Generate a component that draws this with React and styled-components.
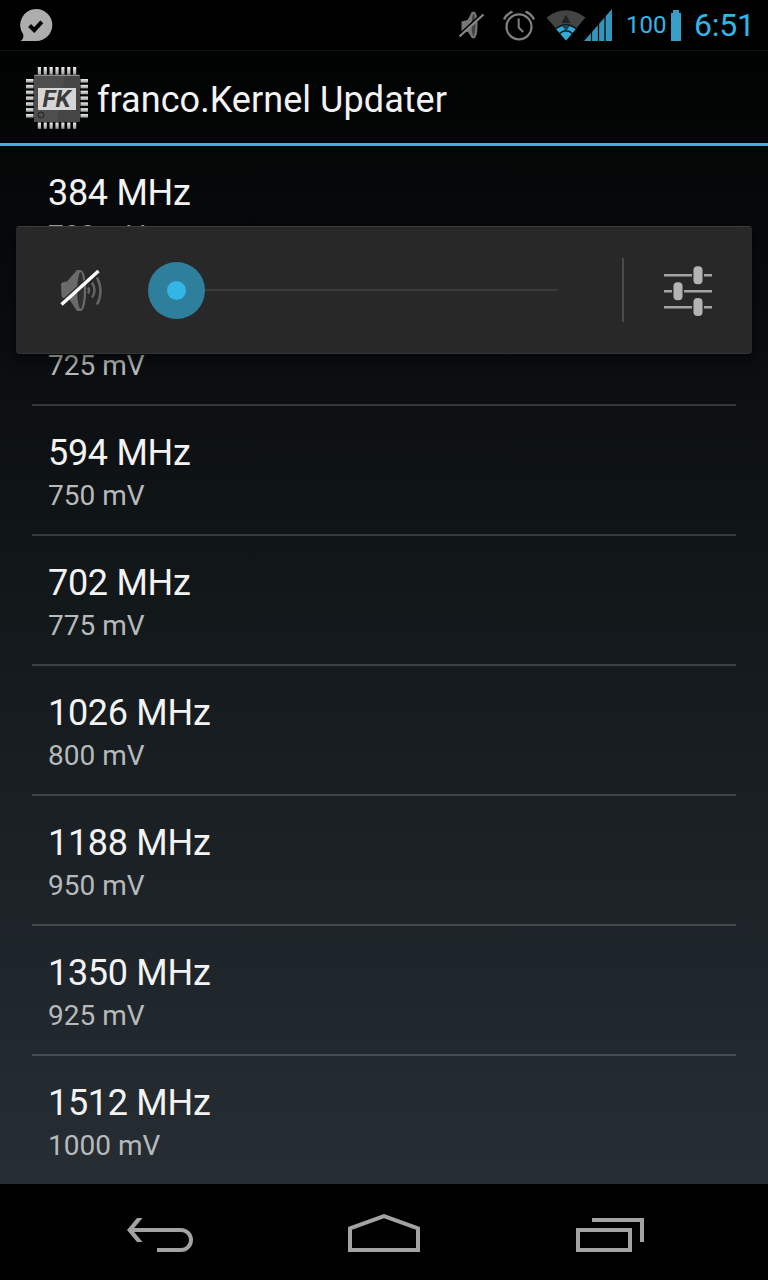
import React from "react";
import styled, { createGlobalStyle } from "styled-components";

const GlobalStyle = createGlobalStyle`
  * {
    box-sizing: border-box;
  }

  body {
    margin: 0;
    background: #000;
    font-family: Roboto, "Liberation Sans", sans-serif;
  }

  svg {
    display: block;
    flex: none;
  }
`;

const Screen = styled.div`
  position: relative;
  width: 768px;
  height: 1280px;
  display: flex;
  flex-direction: column;
  overflow: hidden;
  background: linear-gradient(#000 0, #010202 50px, #0c1012 410px, #262e34 1184px);
`;

const StatusBar = styled.header`
  height: 50px;
  display: flex;
  align-items: center;
  padding: 0 17px 0 20px;
  background: #000;
  color: #33b5e5;
`;

const StatusIcons = styled.div`
  display: flex;
  align-items: center;
  margin-left: auto;
`;

const Indicators = styled.div`
  display: flex;
  align-items: center;
  gap: 18px;
  margin-right: 11px;
`;

const Signals = styled.div`
  display: flex;

  svg + svg {
    margin-left: -2px;
  }
`;

const BatteryLevel = styled.span`
  width: 45px;
  margin-left: 14px;
  font-size: 24px;
  line-height: 52px;
`;

const Clock = styled.span`
  width: 57px;
  margin-left: 13px;
  font-size: 32px;
  line-height: 52px;
  letter-spacing: -0.2px;
  white-space: nowrap;
`;

const ActionBar = styled.div`
  height: 96px;
  display: flex;
  align-items: center;
  padding: 2px 0 0 25px;
  border-top: 1px solid #121414;
  border-bottom: 3px solid #3eb1e0;
`;

const Title = styled.h1`
  margin: 0 0 0 8px;
  padding-top: 4px;
  font-size: 36px;
  font-weight: 400;
  line-height: 42px;
  letter-spacing: 0.05px;
  color: #f3f3f3;
`;

const List = styled.ul`
  flex: 1;
  margin: 0;
  padding: 0 32px;
  list-style: none;
`;

const Item = styled.li`
  height: 130px;
  padding: 26px 16px 0;
  border-bottom: 2px solid rgba(255, 255, 255, 0.17);

  &:last-child {
    height: 128px;
    border-bottom: 0;
  }
`;

const Frequency = styled.div`
  font-size: 36px;
  line-height: 42px;
  letter-spacing: -0.3px;
  color: #f3f3f3;
`;

const Voltage = styled.div`
  margin-top: 5px;
  font-size: 28px;
  line-height: 33px;
  color: #b7b9ba;
`;

const VolumePanel = styled.div`
  position: absolute;
  top: 226px;
  left: 16px;
  width: 736px;
  height: 128px;
  display: flex;
  align-items: center;
  padding: 0 39px 0 44px;
  background: #282828;
  border-top: 1px solid #3c3c3c;
  border-bottom: 1px solid #333;
  border-radius: 4px;
  box-shadow: 0 4px 12px 3px rgba(0, 0, 0, 0.42);
`;

const Slider = styled.div`
  flex: 1;
  display: flex;
  align-items: center;
  margin-left: 43.5px;
`;

const Thumb = styled.div`
  width: 57px;
  height: 57px;
  display: grid;
  place-items: center;
  border-radius: 50%;
  background: #2d7f9c;

  &::after {
    content: "";
    width: 19px;
    height: 19px;
    border-radius: 50%;
    background: #33b5e5;
  }
`;

const Track = styled.div`
  flex: 1;
  height: 2px;
  background: #3b3b3b;
`;

const Separator = styled.div`
  width: 2px;
  height: 64px;
  margin: 0 39px 0 64px;
  background: #4a4a4a;
`;

const NavBar = styled.nav`
  height: 96px;
  display: flex;
  align-items: center;
  justify-content: space-between;
  padding: 0 124px;
  background: #000;
`;

const ChatIcon = () => (
  <svg width="33" height="34" viewBox="0 0 33 34">
    <path
      d="M16.3 1a16 16 0 1 1 0 32H.5c2.4-1.4 3.2-3.4 2.7-6.8A16 16 0 0 1 16.3 1z"
      fill="#adadad"
    />
    <path d="M9.6 17.500l4.600 4.600 7.600-8.200" fill="none" stroke="#000" strokeWidth="4" />
  </svg>
);

const SilentIcon = () => (
  <svg width="26" height="30" viewBox="0 0 26 30">
    <path d="M2.500 11.500l6-1.500L13 2h2.500v26H13l-4-6-6.500-1z" fill="#777" />
    <ellipse cx="14.500" cy="15" rx="3" ry="12.500" fill="#444" stroke="#777" strokeWidth="2" />
    <path d="M0 24.600L24 2.600" stroke="#000" strokeWidth="1.500" />
    <path d="M.5 26.500L24.500 4.500" stroke="#888" strokeWidth="2.200" />
  </svg>
);

const AlarmIcon = () => (
  <svg width="32" height="32" viewBox="0 0 32 32" fill="none" stroke="#808080">
    <circle cx="16" cy="17.800" r="12.500" strokeWidth="2.200" />
    <path d="M15.700 9.500v9l4.500 4.500" strokeWidth="2" />
    <path d="M1 10.500C3 6.500 6 4 9.500 2.700M31 10.500c-2-4-5-6.500-8.500-7.800" strokeWidth="2.400" />
  </svg>
);

const WifiIcon = () => (
  <svg width="40" height="32" viewBox="0 0 40 32">
    <path d="M.5 8.500Q20-6 39.500 8.500L20 31.500z" fill="#444" />
    <path d="M20 5.500l4.500 8.500h-9z" fill="#222" />
    <path d="M10 20Q20 11 30 20L20 31.500z" fill="#33a9d4" />
    <path
      d="M9 20.500Q20 11 31 20.500M13 25q7-6.500 14 0"
      fill="none"
      stroke="#04141a"
      strokeWidth="1.400"
    />
    <path d="M17 17.500h6l-3 4zM16 22l-1.500 1.500M24 22l1.500 1.500" fill="#1d4250" stroke="#1d4250" />
  </svg>
);

const SignalIcon = () => (
  <svg width="28" height="32" viewBox="0 0 28 32">
    <path d="M0 32L28 0v32z" fill="#3395ba" />
    <path d="M7.500 20v12M14.500 12v20M21 4v28" stroke="#000" strokeWidth="1.200" />
  </svg>
);

const BatteryIcon = () => (
  <svg width="10" height="31" viewBox="0 0 10 31">
    <path d="M2 0h6v3h2v28H0V3h2z" fill="#359fc7" />
  </svg>
);

const pins = [0, 1, 2, 3, 4, 5, 6];

const ChipIcon = () => (
  <svg width="64" height="64" viewBox="0 0 64 64">
    <defs>
      <linearGradient id="pin" x2="0" y2="1">
        <stop offset="0" stopColor="#eee" />
        <stop offset="1" stopColor="#999" />
      </linearGradient>
    </defs>
    {pins.map((i) => (
      <g key={i}>
        <rect x={12.8 + i * 5.87} y="1" width="3.200" height="8" fill="url(#pin)" />
        <rect x={12.8 + i * 5.87} y="56.500" width="3.200" height="6.300" fill="url(#pin)" />
        <rect x="1" y={13 + i * 5.83} width="7.500" height="3.600" fill="url(#pin)" />
        <rect x="55.500" y={13 + i * 5.83} width="7.500" height="3.600" fill="url(#pin)" />
      </g>
    ))}
    <rect x="9" y="8.500" width="46" height="47.500" rx="1" fill="#454545" />
    <path d="M9 9.500h31L32 56H9z" fill="#4e4e4e" />
    <path d="M9.500 9.500h45" stroke="#8b8b8b" />
    <rect x="13" y="22" width="38" height="22" fill="#d6d6d6" />
    <text
      x="31.500"
      y="41"
      textAnchor="middle"
      textLength="28"
      lengthAdjust="spacingAndGlyphs"
      fontSize="23"
      fontWeight="700"
      fontStyle="italic"
      fill="#3b3b3b"
    >
      FK
    </text>
    <circle cx="16" cy="49" r="3" fill="none" stroke="#242424" />
  </svg>
);

const MutedIcon = () => (
  <svg width="44" height="44" viewBox="0 0 44 44">
    <path d="M1 17c0-2 1-3 6-3.500L17 2h3v41h-3L9 31c-5 0-7-1-7.500-3z" fill="#6a6a6a" />
    <ellipse cx="20.500" cy="22.500" rx="4.500" ry="19.500" fill="#303030" stroke="#6a6a6a" strokeWidth="2.200" />
    <path
      d="M28 19.500q2 3 0 6M32 14.500q5 8 0 15M37 9.500q7 14 0 27"
      fill="none"
      stroke="#666"
      strokeWidth="2.400"
    />
    <path d="M0 35L37 2" stroke="#282828" strokeWidth="2" />
    <path d="M1.500 36.500L38.500 3" stroke="#fff" strokeWidth="3.400" />
  </svg>
);

const MixerIcon = () => (
  <svg width="50" height="52" viewBox="0 0 50 52">
    <path
      d="M1 11.300h28M41 11.300h8M1 27.300h8M21 27.300h28M1 43.300h28M41 43.300h8"
      stroke="#a3a3a3"
      strokeWidth="2.600"
    />
    <rect x="30.500" y="2.300" width="9" height="18" rx="4" fill="#b3b3b3" />
    <rect x="10.500" y="18.300" width="9" height="18" rx="4" fill="#b3b3b3" />
    <rect x="30.500" y="34" width="9" height="18" rx="4" fill="#b3b3b3" />
  </svg>
);

const NavIcon = styled.svg.attrs({ width: 72, height: 42, viewBox: "0 0 72 42" })`
  fill: none;
  stroke: #a3a3a3;
  stroke-width: 4;
`;

const ArrowHead = styled.path`
  fill: #a3a3a3;
  stroke: none;
`;

const voltages = [
  { mhz: 384, mv: 700 },
  { mhz: 486, mv: 725 },
  { mhz: 594, mv: 750 },
  { mhz: 702, mv: 775 },
  { mhz: 1026, mv: 800 },
  { mhz: 1188, mv: 950 },
  { mhz: 1350, mv: 925 },
  { mhz: 1512, mv: 1000 },
];

const Status = () => (
  <StatusBar>
    <ChatIcon />
    <StatusIcons>
      <Indicators>
        <SilentIcon />
        <AlarmIcon />
      </Indicators>
      <Signals>
        <WifiIcon />
        <SignalIcon />
      </Signals>
      <BatteryLevel>100</BatteryLevel>
      <BatteryIcon />
      <Clock>6:51</Clock>
    </StatusIcons>
  </StatusBar>
);

const App = () => {
  return (
    <>
      <GlobalStyle />
      <Screen>
        <Status />
        <ActionBar>
          <ChipIcon />
          <Title>franco.Kernel Updater</Title>
        </ActionBar>
        <List>
          {voltages.map(({ mhz, mv }) => (
            <Item key={mhz}>
              <Frequency>{mhz} MHz</Frequency>
              <Voltage>{mv} mV</Voltage>
            </Item>
          ))}
        </List>
        <VolumePanel>
          <MutedIcon />
          <Slider>
            <Thumb />
            <Track />
          </Slider>
          <Separator />
          <MixerIcon />
        </VolumePanel>
        <NavBar>
          <NavIcon>
            <path d="M6 19h51a10 10 0 0 1 0 20H33" />
            <ArrowHead d="M3 19L13 7h5.500l-10 12 10 12H13z" />
          </NavIcon>
          <NavIcon>
            <path d="M2 17.300L36 5.100l34 12.200V39H2z" />
          </NavIcon>
          <NavIcon>
            <path d="M6 19h52v20H6zM20 9h50v22" />
          </NavIcon>
        </NavBar>
      </Screen>
    </>
  );
};

export default App;
